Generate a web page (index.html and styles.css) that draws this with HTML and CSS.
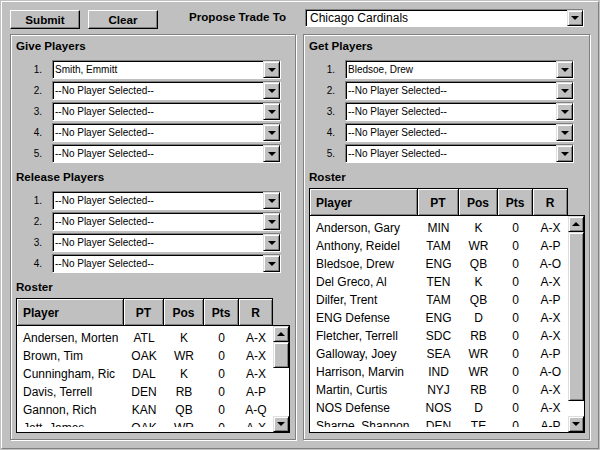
FILE: index.html
```html
<!DOCTYPE html>
<html>
<head>
<meta charset="utf-8">
<title>Propose Trade</title>
<link rel="stylesheet" href="styles.css">
</head>
<body>
<div class="app">
  <div class="topbar">
    <button class="btn">Submit</button>
    <button class="btn">Clear</button>
    <span class="propose">Propose Trade To</span>
    <div class="combo team"><span class="val">Chicago Cardinals</span><span class="drop"><i class="tri-down"></i></span></div>
  </div>
  <div class="panels">
    <section class="panel pleft">
      <h2 class="ptitle">Give Players</h2>
      <div class="slots">
        <div class="slot"><span class="num">1.</span><div class="combo"><span class="val">Smith, Emmitt</span><span class="drop"><i class="tri-down"></i></span></div></div>
        <div class="slot"><span class="num">2.</span><div class="combo"><span class="val">--No Player Selected--</span><span class="drop"><i class="tri-down"></i></span></div></div>
        <div class="slot"><span class="num">3.</span><div class="combo"><span class="val">--No Player Selected--</span><span class="drop"><i class="tri-down"></i></span></div></div>
        <div class="slot"><span class="num">4.</span><div class="combo"><span class="val">--No Player Selected--</span><span class="drop"><i class="tri-down"></i></span></div></div>
        <div class="slot"><span class="num">5.</span><div class="combo"><span class="val">--No Player Selected--</span><span class="drop"><i class="tri-down"></i></span></div></div>
      </div>
      <h2 class="ptitle sub">Release Players</h2>
      <div class="slots">
        <div class="slot"><span class="num">1.</span><div class="combo"><span class="val">--No Player Selected--</span><span class="drop"><i class="tri-down"></i></span></div></div>
        <div class="slot"><span class="num">2.</span><div class="combo"><span class="val">--No Player Selected--</span><span class="drop"><i class="tri-down"></i></span></div></div>
        <div class="slot"><span class="num">3.</span><div class="combo"><span class="val">--No Player Selected--</span><span class="drop"><i class="tri-down"></i></span></div></div>
        <div class="slot"><span class="num">4.</span><div class="combo"><span class="val">--No Player Selected--</span><span class="drop"><i class="tri-down"></i></span></div></div>
      </div>
      <h2 class="ptitle sub">Roster</h2>
      <div class="thead">
        <span class="th pl">Player</span><span class="th">PT</span><span class="th">Pos</span><span class="th">Pts</span><span class="th">R</span>
      </div>
      <div class="tbody">
        <div class="list">
          <div class="row"><span>Andersen, Morten</span><span>ATL</span><span>K</span><span>0</span><span>A-X</span></div>
          <div class="row"><span>Brown, Tim</span><span>OAK</span><span>WR</span><span>0</span><span>A-X</span></div>
          <div class="row"><span>Cunningham, Ric</span><span>DAL</span><span>K</span><span>0</span><span>A-X</span></div>
          <div class="row"><span>Davis, Terrell</span><span>DEN</span><span>RB</span><span>0</span><span>A-P</span></div>
          <div class="row"><span>Gannon, Rich</span><span>KAN</span><span>QB</span><span>0</span><span>A-Q</span></div>
          <div class="row"><span>Jett, James</span><span>OAK</span><span>WR</span><span>0</span><span>A-X</span></div>
        </div>
        <div class="sb">
          <span class="sbtn"><i class="tri-up"></i></span>
          <span class="thumb t-left"></span>
          <span class="track"></span>
          <span class="sbtn"><i class="tri-down"></i></span>
        </div>
      </div>
    </section>
    <section class="panel pright">
      <h2 class="ptitle">Get Players</h2>
      <div class="slots">
        <div class="slot"><span class="num">1.</span><div class="combo"><span class="val">Bledsoe, Drew</span><span class="drop"><i class="tri-down"></i></span></div></div>
        <div class="slot"><span class="num">2.</span><div class="combo"><span class="val">--No Player Selected--</span><span class="drop"><i class="tri-down"></i></span></div></div>
        <div class="slot"><span class="num">3.</span><div class="combo"><span class="val">--No Player Selected--</span><span class="drop"><i class="tri-down"></i></span></div></div>
        <div class="slot"><span class="num">4.</span><div class="combo"><span class="val">--No Player Selected--</span><span class="drop"><i class="tri-down"></i></span></div></div>
        <div class="slot"><span class="num">5.</span><div class="combo"><span class="val">--No Player Selected--</span><span class="drop"><i class="tri-down"></i></span></div></div>
      </div>
      <h2 class="ptitle sub">Roster</h2>
      <div class="thead">
        <span class="th pl">Player</span><span class="th">PT</span><span class="th">Pos</span><span class="th">Pts</span><span class="th">R</span>
      </div>
      <div class="tbody">
        <div class="list">
          <div class="row"><span>Anderson, Gary</span><span>MIN</span><span>K</span><span>0</span><span>A-X</span></div>
          <div class="row"><span>Anthony, Reidel</span><span>TAM</span><span>WR</span><span>0</span><span>A-P</span></div>
          <div class="row"><span>Bledsoe, Drew</span><span>ENG</span><span>QB</span><span>0</span><span>A-O</span></div>
          <div class="row"><span>Del Greco, Al</span><span>TEN</span><span>K</span><span>0</span><span>A-X</span></div>
          <div class="row"><span>Dilfer, Trent</span><span>TAM</span><span>QB</span><span>0</span><span>A-P</span></div>
          <div class="row"><span>ENG Defense</span><span>ENG</span><span>D</span><span>0</span><span>A-X</span></div>
          <div class="row"><span>Fletcher, Terrell</span><span>SDC</span><span>RB</span><span>0</span><span>A-X</span></div>
          <div class="row"><span>Galloway, Joey</span><span>SEA</span><span>WR</span><span>0</span><span>A-P</span></div>
          <div class="row"><span>Harrison, Marvin</span><span>IND</span><span>WR</span><span>0</span><span>A-O</span></div>
          <div class="row"><span>Martin, Curtis</span><span>NYJ</span><span>RB</span><span>0</span><span>A-X</span></div>
          <div class="row"><span>NOS Defense</span><span>NOS</span><span>D</span><span>0</span><span>A-X</span></div>
          <div class="row"><span>Sharpe, Shannon</span><span>DEN</span><span>TE</span><span>0</span><span>A-P</span></div>
        </div>
        <div class="sb">
          <span class="sbtn"><i class="tri-up"></i></span>
          <span class="thumb t-right"></span>
          <span class="track"></span>
          <span class="sbtn"><i class="tri-down"></i></span>
        </div>
      </div>
    </section>
  </div>
</div>
</body>
</html>
```

FILE: styles.css
```css
* { box-sizing: border-box; }
html, body { margin: 0; padding: 0; }
body {
  background: #c0c0c0;
  font-family: "Liberation Sans", Arial, sans-serif;
  color: #000;
}
.app {
  width: 598px;
  height: 448px;
  margin: 1px;
  border: 1px solid;
  border-color: #fff #808080 #808080 #fff;
  display: flex;
  flex-direction: column;
}
.topbar {
  height: 32px;
  display: flex;
  align-items: flex-start;
  padding: 8px 0 0 8px;
}
.btn {
  width: 70px;
  height: 19px;
  padding: 0;
  font: bold 11.6px/14px "Liberation Sans", Arial, sans-serif;
  color: #000;
  background: #c0c0c0;
  border: 1px solid;
  border-color: #fff #000 #000 #fff;
  box-shadow: inset -1px -1px 0 #808080;
}
.btn + .btn { margin-left: 8px; }
.propose {
  margin-left: 31px;
  font: bold 11.6px/14px "Liberation Sans", Arial, sans-serif;
}
.combo {
  width: 229px;
  height: 19px;
  display: flex;
  background: #fff;
  border: 1px solid;
  border-color: #808080 #fff #fff #808080;
  box-shadow: inset 1px 1px 0 #000;
}
.combo .val {
  flex: 1;
  padding-left: 2px;
  font-size: 10px;
  line-height: 17px;
  white-space: nowrap;
  overflow: hidden;
}
.drop {
  width: 17px;
  height: 17px;
  flex: none;
  display: flex;
  align-items: center;
  justify-content: center;
  background: #c0c0c0;
  border: 1px solid;
  border-color: #dfdfdf #000 #000 #dfdfdf;
  box-shadow: inset 1px 1px 0 #fff, inset -1px -1px 0 #808080;
}
.combo.team {
  width: 279px;
  height: 18px;
  margin: -1px 14px 0 auto;
}
.combo.team .val {
  font-size: 12px;
  line-height: 16px;
  padding-left: 4px;
}
.combo.team .drop { width: 16px; height: 16px; }
.tri-down, .tri-up {
  display: block;
  width: 0;
  height: 0;
  border-left: 4px solid transparent;
  border-right: 4px solid transparent;
}
.tri-down { border-top: 4px solid #000; }
.tri-up { border-bottom: 4px solid #000; }

.panels {
  display: flex;
  gap: 7px;
  padding-left: 8px;
}
.panel {
  height: 406px;
  border: 1px solid #808080;
  box-shadow: inset 1px 1px 0 #fff, 1px 1px 0 #fff;
  padding: 4px 5px 6px 5px;
  display: flex;
  flex-direction: column;
}
.pleft { width: 286px; }
.pright { width: 287px; padding-right: 4px; }
.ptitle {
  margin: 0;
  height: 14px;
  font: bold 11.6px/14px "Liberation Sans", Arial, sans-serif;
}
.ptitle.sub { margin-top: 7px; }
.slots {
  margin-top: 7px;
  display: flex;
  flex-direction: column;
  gap: 2px;
}
.slot {
  display: flex;
  align-items: center;
  height: 19px;
}
.num {
  width: 26px;
  margin-right: 10px;
  text-align: right;
  font-size: 10px;
}
.thead {
  margin-top: 4px;
  height: 27px;
  display: grid;
  border-top: 1px solid #000;
  border-left: 1px solid #000;
}
.pleft .thead, .pleft .row { grid-template-columns: 107px 40px 40px 35px 34px; }
.pright .thead, .pright .row { grid-template-columns: 108px 41px 39px 35px 35px; }
.pleft .thead { width: 257px; }
.pright .thead { width: 259px; }
.th {
  display: flex;
  align-items: center;
  justify-content: center;
  padding-top: 2px;
  border-right: 1px solid #000;
  box-shadow: inset 1px 1px 0 #fff, inset -1px -1px 0 #808080;
  font: bold 12px/14px "Liberation Sans", Arial, sans-serif;
}
.th.pl { justify-content: flex-start; padding-left: 6px; }
.tbody {
  flex: 1;
  display: flex;
  border: 1px solid #000;
  background: #fff;
  min-height: 0;
}
.list {
  flex: 1;
  margin: 3px 0 5px;
  overflow: hidden;
}
.row {
  display: grid;
  height: 18px;
  font-size: 12px;
  line-height: 18px;
}
.row span {
  text-align: center;
  white-space: nowrap;
  overflow: hidden;
}
.row span:first-child { text-align: left; padding-left: 6px; }
.sb {
  width: 16px;
  flex: none;
  display: flex;
  flex-direction: column;
  background: #fff;
}
.sbtn, .thumb {
  flex: none;
  background: #c0c0c0;
  border: 1px solid;
  border-color: #dfdfdf #000 #000 #dfdfdf;
  box-shadow: inset 1px 1px 0 #fff, inset -1px -1px 0 #808080;
}
.sbtn {
  height: 16px;
  display: flex;
  align-items: center;
  justify-content: center;
}
.t-left { height: 26px; }
.t-right { height: 169px; }
.track { flex: 1; }
```
